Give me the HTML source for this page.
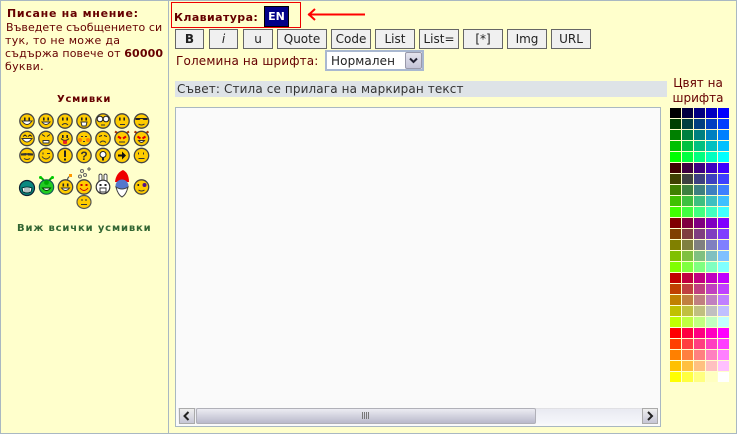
<!DOCTYPE html>
<html><head><meta charset="utf-8">
<style>
html,body{margin:0;padding:0;background:#ffc}
#p{position:relative;width:737px;height:434px;overflow:hidden;background:#ffc;font-family:"DejaVu Sans","Liberation Sans",sans-serif;font-size:11px;color:#600}
.a{position:absolute;white-space:nowrap;line-height:13px}
.b{position:absolute;top:29px;height:18px;border:1px solid #666;background:#f0f0f0;color:#222;text-align:center;line-height:18px;box-sizing:content-box;font-size:12px}
.l{position:absolute;background:#a9b8c2}
#g{position:absolute;left:670px;top:108px;width:60px}
#g i{float:left;width:11px;height:10px;margin:0 1px 1px 0}
</style></head><body><div id="p">
<div class="l" style="left:0;top:0;width:737px;height:1px"></div>
<div class="l" style="left:0;top:433px;width:737px;height:1px"></div>
<div class="l" style="left:0;top:0;width:1px;height:434px"></div>
<div class="l" style="left:736px;top:0;width:1px;height:434px"></div>
<div class="l" style="left:168px;top:0;width:1px;height:434px"></div>

<div class="a" style="left:7px;top:7px;font-weight:bold;font-size:11px;letter-spacing:.7px">Писане на мнение:</div>
<div class="a" style="left:6px;top:21px;letter-spacing:.05px">Въведете съобщението си</div>
<div class="a" style="left:5px;top:34px;letter-spacing:.28px">тук, то не може да</div>
<div class="a" style="left:5px;top:47px;letter-spacing:.13px">съдържа повече от <b>60000</b></div>
<div class="a" style="left:5px;top:60px;letter-spacing:.3px">букви.</div>
<div class="a" style="left:57px;top:93px;font-weight:bold;font-size:10px;letter-spacing:.75px">Усмивки</div>

<svg style="position:absolute;left:0;top:105px" width="168" height="110" viewBox="0 105 168 110">
<defs>
<g id="f"><circle r="7.2" fill="#fc0" stroke="#444" stroke-width="1.300"/></g>
<path id="sm" d="M-4 1Q0 6 4 1Z" fill="#fff" stroke="#333" stroke-width="1"/>
<g id="ey"><rect x="-3" y="-3.5" width="1.6" height="3" fill="#222"/><rect x="1.4" y="-3.5" width="1.6" height="3" fill="#222"/></g>
</defs>
<g transform="translate(27,121)"><use href="#f"/><use href="#ey"/><path d="M-5 0Q0 7 5 0Z" fill="#fff" stroke="#333"/></g>
<g transform="translate(46,121)"><use href="#f"/><use href="#ey"/><use href="#sm"/></g>
<g transform="translate(65,121)"><use href="#f"/><use href="#ey"/><path d="M-3 4Q0 1 3 4" fill="none" stroke="#333"/></g>
<g transform="translate(84,121)"><use href="#f"/><use href="#ey"/><path d="M-3 1H3L2 5H-2Z" fill="#fff" stroke="#333"/></g>
<g transform="translate(103,121)"><use href="#f"/><circle cx="-3" cy="-2" r="2.8" fill="#fff" stroke="#222"/><circle cx="3" cy="-2" r="2.8" fill="#fff" stroke="#222"/><path d="M-2 4H2" stroke="#333"/></g>
<g transform="translate(122,121)"><use href="#f"/><use href="#ey"/><path d="M-2 3.5H3" stroke="#333"/></g>
<g transform="translate(141.500,121)"><use href="#f"/><path d="M-6-3H6V-1H2L1-2H-1L-2-1H-6Z" fill="#222"/><path d="M-3 3Q0 5 3 3" fill="none" stroke="#333"/></g>

<g transform="translate(27,138.500)"><use href="#f"/><path d="M-4-2L-2-3.500L0-2M1-2L3-3.500L5-2" fill="none" stroke="#222"/><path d="M-5 0Q0 7 5 0Z" fill="#fff" stroke="#333"/></g>
<g transform="translate(46,138.500)"><use href="#f"/><path d="M-4-4L-1-2M4-4L1-2" stroke="#222"/><rect x="-3" y="2" width="6" height="2.500" fill="#fff" stroke="#333"/></g>
<g transform="translate(65,138.500)"><use href="#f"/><use href="#ey"/><path d="M-4 0Q0 4 4 0" fill="none" stroke="#333"/><path d="M-2 2H2V5Q0 6-2 5Z" fill="#e22"/></g>
<g transform="translate(84,138.500)"><use href="#f"/><circle cx="-4" cy="1.500" r="2" fill="#f80"/><circle cx="4" cy="1.500" r="2" fill="#f80"/><path d="M-3-2H-1M1-2H3" stroke="#333"/><path d="M-1 3H1" stroke="#333"/></g>
<g transform="translate(103,138.500)"><use href="#f"/><path d="M-4-2L-1-3M4-2L1-3" stroke="#222"/><path d="M-3 4Q0 1 3 4" fill="none" stroke="#333"/></g>
<g transform="translate(122,138.500)"><path d="M-7-7L-4-5M7-7L4-5" stroke="#a30" stroke-width="2"/><use href="#f"/><path d="M-4-2L-1 0M4-2L1 0" stroke="#d00" stroke-width="2"/><path d="M-3 3.500H3" stroke="#333"/></g>
<g transform="translate(141.500,138.500)"><path d="M-7-7L-4-5M7-7L4-5" stroke="#a30" stroke-width="2"/><use href="#f"/><path d="M-4-2L-1 0M4-2L1 0" stroke="#d00" stroke-width="2"/><path d="M-3 2Q0 6 3 2Z" fill="#fff" stroke="#333"/></g>

<g transform="translate(27,155.500)"><use href="#f"/><path d="M-6-2L-1-2.500L0-2L1-2.500L6-2V0H1L0-1L-1 0H-6Z" fill="#333"/><path d="M-3 3Q0 5 3 3" fill="none" stroke="#333"/></g>
<g transform="translate(46,155.500)"><use href="#f"/><path d="M-3-3V-1M1-2H4" stroke="#333"/><path d="M-4 1Q0 6 4 1" fill="none" stroke="#333"/></g>
<g transform="translate(65,155.500)"><use href="#f"/><rect x="-1" y="-5" width="2" height="6.500" fill="#222"/><rect x="-1" y="3" width="2" height="2" fill="#222"/></g>
<g transform="translate(84,155.500)"><use href="#f"/><text x="0" y="4.500" text-anchor="middle" font-family="Liberation Sans,sans-serif" font-size="12" font-weight="bold" fill="#333">?</text></g>
<g transform="translate(103,155.500)"><use href="#f"/><circle cy="-1" r="3" fill="#fff" stroke="#222"/><rect x="-1" y="2" width="2" height="3" fill="#222"/></g>
<g transform="translate(122,155.500)"><use href="#f"/><path d="M-4-1H0V-4L4 0L0 4V1H-4Z" fill="#111"/></g>
<g transform="translate(141.500,155.500)"><use href="#f"/><path d="M-3-3V-1M2-3V-1" stroke="#333"/><path d="M-3 3H3" stroke="#333"/></g>

<g transform="translate(27,188)"><circle r="7.500" fill="#0a8a80" stroke="#123" stroke-width="1.200"/><path d="M-5 0Q0-2 5 0L4 4Q0 6-4 4Z" fill="#fff" stroke="#033"/><path d="M-2 0V5M0 0V5M2 0V5" stroke="#033" stroke-width=".6"/></g>
<g transform="translate(46.500,187)"><path d="M-2-6L-6-10M2-6L6-10" stroke="#0a0" stroke-width="2"/><circle cx="-6" cy="-9.500" r="1.500" fill="#0c0"/><circle cx="6" cy="-9.500" r="1.500" fill="#0c0"/><circle r="7.200" fill="#2c2" stroke="#155" stroke-width="1.100"/><circle cx="0" cy="-4.500" r="2.400" fill="#0a0"/><path d="M-4 1Q0 6 4 1Z" fill="#fff" stroke="#030"/></g>
<g transform="translate(65.500,187)"><path d="M2-7Q2-10 5-11" fill="none" stroke="#444"/><rect x="3.500" y="-13" width="3" height="3" fill="#f90"/><use href="#f"/><use href="#ey"/><use href="#sm"/></g>
<g transform="translate(84,187)"><use href="#f"/><path d="M-3.500-2H-1.500M1.500-2H3.500" stroke="#c00" stroke-width="2"/><path d="M-4 1Q0 6 4 1" fill="none" stroke="#c00"/></g>
<g fill="none" stroke="#666"><circle cx="82" cy="171" r="1.500"/><circle cx="80" cy="176.500" r="1.500"/><circle cx="85" cy="175" r="1.500"/></g><path d="M87 169H91M89 167V171" stroke="#555" fill="none"/>
<g transform="translate(103,187)"><path d="M-4-4V-12Q-2.500-14-1-12V-4M1-4V-12Q2.500-14 4-12V-4" fill="#fff" stroke="#444"/><circle r="6.800" fill="#fff" stroke="#333" stroke-width="1.200"/><rect x="-3.500" y="-3" width="2" height="2" fill="#222"/><rect x="1.500" y="-3" width="2" height="2" fill="#222"/><path d="M-3 1H3V5H-3Z" fill="#fff" stroke="#333"/></g>
<g transform="translate(122,183)"><path d="M-7-1Q-6-10 1-13Q7-10 7-1Z" fill="#e00"/><circle cy="3" r="6.500" fill="#57c"/><path d="M-6 4Q0 8 6 4Q4 12 0 14Q-4 12-6 4Z" fill="#fff" stroke="#444"/></g>
<g transform="translate(141.500,187)"><use href="#f"/><circle cx="3" cy="-2" r="2" fill="#518"/><rect x="-4" y="-3" width="1.600" height="2" fill="#222"/><path d="M-3 3Q0 5 3 3" fill="none" stroke="#333"/></g>
<g transform="translate(84,202)"><ellipse rx="7" ry="6.500" fill="#fc0" stroke="#555" stroke-width="1.200"/><path d="M-3-2H-1M1-2H3" stroke="#333"/><path d="M-3 2.500H3" stroke="#333"/></g>
</svg>

<div class="a" style="left:17px;top:222px;font-weight:bold;font-size:10px;color:#363;letter-spacing:.85px">Виж всички усмивки</div>

<div style="position:absolute;left:171px;top:2px;width:128px;height:24px;border:1px solid #e00"></div>
<div class="a" style="left:174px;top:11px;font-weight:bold;font-size:11px;letter-spacing:.4px">Клавиатура:</div>
<div style="position:absolute;left:264px;top:6px;width:23px;height:19px;border:1px solid #000;background:#008;color:#fff;font-weight:bold;font-size:11px;line-height:20px;text-align:center">EN</div>
<svg style="position:absolute;left:305px;top:6px" width="62" height="18"><path d="M3 8.500H60" stroke="#f00" stroke-width="2"/><path d="M10 3L4 8.500L10 14" fill="none" stroke="#f00" stroke-width="2"/></svg>

<div class="b" style="left:175px;width:27px;font-weight:bold">B</div>
<div class="b" style="left:209px;width:27px;font-style:italic">i</div>
<div class="b" style="left:243px;width:28px">u</div>
<div class="b" style="left:277px;width:48px">Quote</div>
<div class="b" style="left:331px;width:38px">Code</div>
<div class="b" style="left:375px;width:38px">List</div>
<div class="b" style="left:419px;width:38px">List=</div>
<div class="b" style="left:463px;width:38px">[*]</div>
<div class="b" style="left:507px;width:38px">Img</div>
<div class="b" style="left:551px;width:38px">URL</div>

<div class="a" style="left:176px;top:55px;font-size:12px;letter-spacing:.15px">Големина на шрифта:</div>
<div style="position:absolute;left:325px;top:50px;width:95px;height:17px;border:2px solid #a9b8d0;background:#fff;color:#222;line-height:18px;font-size:12px;letter-spacing:.1px"><span style="margin-left:4px">Нормален</span>
<div style="position:absolute;right:0;top:0;width:15px;height:15px;border:1px solid #99a;border-radius:2px;background:linear-gradient(#e4e4ee,#c4c4d8)"><svg width="15" height="15" style="display:block"><path d="M4 5.500L7.500 9L11 5.500" fill="none" stroke="#223" stroke-width="2"/></svg></div></div>

<div class="a" style="left:175px;top:81px;width:492px;height:16px;background:#dee3e7;color:#333;line-height:17px;text-indent:2px;font-size:12px;letter-spacing:.12px">Съвет: Стила се прилага на маркиран текст</div>

<div class="a" style="left:660px;top:76px;width:76px;text-align:center;font-size:12px;line-height:15px;white-space:normal">Цвят на<br>шрифта</div>

<div style="position:absolute;left:175px;top:107px;width:484px;height:318px;border:1px solid #a9b8c2;background:#fafafa"></div>
<div style="position:absolute;left:178px;top:408px;width:480px;height:16px;background:linear-gradient(#e9eaf1,#f6f7fb);border-top:1px solid #e0e0e4;box-sizing:border-box"></div>
<div style="position:absolute;left:196px;top:408px;width:340px;height:16px;box-sizing:border-box;border:1px solid #b0b0b8;border-radius:2px;background:linear-gradient(#ececf2,#b9b9cb)"></div>
<svg style="position:absolute;left:362px;top:412px" width="8" height="8"><path d="M.5 0V7M2.500 0V7M4.500 0V7M6.500 0V7" stroke="#777" stroke-width="1"/></svg>
<div style="position:absolute;left:179px;top:408px;width:16px;height:16px;box-sizing:border-box;border:1px solid #aaa;background:linear-gradient(#eee,#c6c6d6)"><svg width="14" height="14" style="display:block"><path d="M8.500 3L4.500 7L8.500 11" fill="none" stroke="#222" stroke-width="2"/></svg></div>
<div style="position:absolute;left:642px;top:408px;width:16px;height:16px;box-sizing:border-box;border:1px solid #aaa;background:linear-gradient(#eee,#c6c6d6)"><svg width="14" height="14" style="display:block"><path d="M5 3L9 7L5 11" fill="none" stroke="#222" stroke-width="2"/></svg></div>

<div id="g">
<i style="background:#000000"></i><i style="background:#000040"></i><i style="background:#000080"></i><i style="background:#0000c0"></i><i style="background:#0000ff"></i>
<i style="background:#004000"></i><i style="background:#004040"></i><i style="background:#004080"></i><i style="background:#0040c0"></i><i style="background:#0040ff"></i>
<i style="background:#008000"></i><i style="background:#008040"></i><i style="background:#008080"></i><i style="background:#0080c0"></i><i style="background:#0080ff"></i>
<i style="background:#00c000"></i><i style="background:#00c040"></i><i style="background:#00c080"></i><i style="background:#00c0c0"></i><i style="background:#00c0ff"></i>
<i style="background:#00ff00"></i><i style="background:#00ff40"></i><i style="background:#00ff80"></i><i style="background:#00ffc0"></i><i style="background:#00ffff"></i>
<i style="background:#400000"></i><i style="background:#400040"></i><i style="background:#400080"></i><i style="background:#4000c0"></i><i style="background:#4000ff"></i>
<i style="background:#404000"></i><i style="background:#404040"></i><i style="background:#404080"></i><i style="background:#4040c0"></i><i style="background:#4040ff"></i>
<i style="background:#408000"></i><i style="background:#408040"></i><i style="background:#408080"></i><i style="background:#4080c0"></i><i style="background:#4080ff"></i>
<i style="background:#40c000"></i><i style="background:#40c040"></i><i style="background:#40c080"></i><i style="background:#40c0c0"></i><i style="background:#40c0ff"></i>
<i style="background:#40ff00"></i><i style="background:#40ff40"></i><i style="background:#40ff80"></i><i style="background:#40ffc0"></i><i style="background:#40ffff"></i>
<i style="background:#800000"></i><i style="background:#800040"></i><i style="background:#800080"></i><i style="background:#8000c0"></i><i style="background:#8000ff"></i>
<i style="background:#804000"></i><i style="background:#804040"></i><i style="background:#804080"></i><i style="background:#8040c0"></i><i style="background:#8040ff"></i>
<i style="background:#808000"></i><i style="background:#808040"></i><i style="background:#808080"></i><i style="background:#8080c0"></i><i style="background:#8080ff"></i>
<i style="background:#80c000"></i><i style="background:#80c040"></i><i style="background:#80c080"></i><i style="background:#80c0c0"></i><i style="background:#80c0ff"></i>
<i style="background:#80ff00"></i><i style="background:#80ff40"></i><i style="background:#80ff80"></i><i style="background:#80ffc0"></i><i style="background:#80ffff"></i>
<i style="background:#c00000"></i><i style="background:#c00040"></i><i style="background:#c00080"></i><i style="background:#c000c0"></i><i style="background:#c000ff"></i>
<i style="background:#c04000"></i><i style="background:#c04040"></i><i style="background:#c04080"></i><i style="background:#c040c0"></i><i style="background:#c040ff"></i>
<i style="background:#c08000"></i><i style="background:#c08040"></i><i style="background:#c08080"></i><i style="background:#c080c0"></i><i style="background:#c080ff"></i>
<i style="background:#c0c000"></i><i style="background:#c0c040"></i><i style="background:#c0c080"></i><i style="background:#c0c0c0"></i><i style="background:#c0c0ff"></i>
<i style="background:#c0ff00"></i><i style="background:#c0ff40"></i><i style="background:#c0ff80"></i><i style="background:#c0ffc0"></i><i style="background:#c0ffff"></i>
<i style="background:#ff0000"></i><i style="background:#ff0040"></i><i style="background:#ff0080"></i><i style="background:#ff00c0"></i><i style="background:#ff00ff"></i>
<i style="background:#ff4000"></i><i style="background:#ff4040"></i><i style="background:#ff4080"></i><i style="background:#ff40c0"></i><i style="background:#ff40ff"></i>
<i style="background:#ff8000"></i><i style="background:#ff8040"></i><i style="background:#ff8080"></i><i style="background:#ff80c0"></i><i style="background:#ff80ff"></i>
<i style="background:#ffc000"></i><i style="background:#ffc040"></i><i style="background:#ffc080"></i><i style="background:#ffc0c0"></i><i style="background:#ffc0ff"></i>
<i style="background:#ffff00"></i><i style="background:#ffff40"></i><i style="background:#ffff80"></i><i style="background:#ffffc0"></i><i style="background:#ffffff"></i>
</div>
</div></body></html>
